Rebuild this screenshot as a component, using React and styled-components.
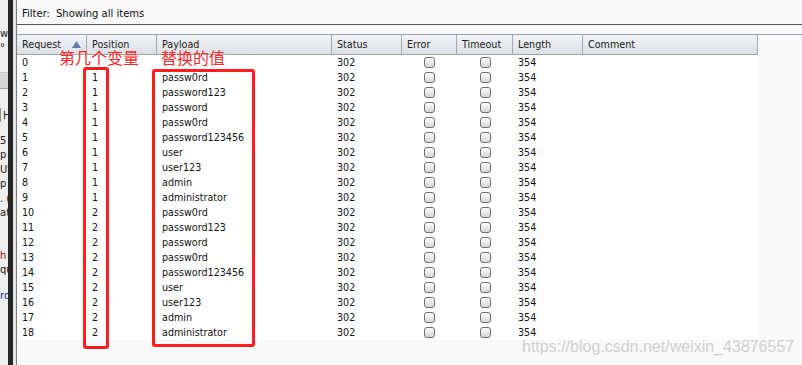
import styled, { createGlobalStyle } from 'styled-components';

const GlobalStyle = createGlobalStyle`
  html, body {
    margin: 0;
    padding: 0;
  }
  body {
    width: 802px;
    height: 365px;
    overflow: hidden;
    background: #f9f9f9;
    font-family: "DejaVu Sans", "Liberation Sans", sans-serif;
    color: #111;
  }
`;

const COLUMNS = '70px 70px 175px 70px 55px 56px 70px 175px';

const payloads = ['passw0rd', 'password123', 'password', 'passw0rd', 'password123456', 'user', 'user123', 'admin', 'administrator'];

const rows = [
    { id: 0, pos: '', payload: '' },
    ...payloads.map((p, i) => ({ id: i + 1, pos: 1, payload: p })),
    ...payloads.map((p, i) => ({ id: i + 10, pos: 2, payload: p })),
];

const sliverLines = [
    { text: 'wh', h: 14, top: 26 },
    { text: '\u00b0 p', h: 14 },
    { band: true, top: 18 },
    { text: 'H', h: 14, top: 19, tab: true },
    { text: '5', h: 14.5, top: 11 },
    { text: 'p', h: 14.5 },
    { text: 'US', h: 14.5 },
    { text: 'p', h: 14.5 },
    { text: '. (', h: 14.5 },
    { text: 'at', h: 14.5 },
    { text: 'h', h: 14.5, top: 28, color: '#8b1010' },
    { text: 'qu', h: 14.5 },
    { text: 'rd', h: 14.5, top: 11, color: '#1b1b9a' },
];

export default function App() {
    return (
        <>
            <GlobalStyle />
            <Frame>
                <Sliver>
                    {sliverLines.map((l, i) =>
                        l.band ? (
                            <SliverBand key={i} style={{ marginTop: l.top }} />
                        ) : (
                            <SliverLine
                                key={i}
                                $tab={l.tab}
                                $color={l.color}
                                style={{ height: l.h, marginTop: l.top || 0 }}
                            >
                                {l.text}
                            </SliverLine>
                        )
                    )}
                </Sliver>
                <Splitter />
                <Gutter />
                <Main>
                    <FilterBar>
                        <FilterLabel>Filter:</FilterLabel>
                        <span>Showing all items</span>
                    </FilterBar>
                    <Pane>
                        <Table>
                            <HeaderRow>
                                <HeadCell>
                                    Request
                                    <SortArrow viewBox="0 0 9 7">
                                        <polygon points="4.5,0 9,7 0,7" />
                                    </SortArrow>
                                </HeadCell>
                                <HeadCell>Position</HeadCell>
                                <HeadCell>Payload</HeadCell>
                                <HeadCell>Status</HeadCell>
                                <HeadCell>Error</HeadCell>
                                <HeadCell>Timeout</HeadCell>
                                <HeadCell>Length</HeadCell>
                                <HeadCell>Comment</HeadCell>
                            </HeaderRow>
                            {rows.map((r) => (
                                <Row key={r.id}>
                                    <Cell>{r.id}</Cell>
                                    <Cell>{r.pos}</Cell>
                                    <Cell>{r.payload}</Cell>
                                    <Cell>302</Cell>
                                    <Cell $center><Check /></Cell>
                                    <Cell $center><Check /></Cell>
                                    <Cell>354</Cell>
                                    <Cell />
                                </Row>
                            ))}
                        </Table>
                    </Pane>
                </Main>

                <Note style={{ left: 59, top: 47 }}>第几个变量</Note>
                <Note style={{ left: 161, top: 47 }}>替换的值</Note>
                <Marker style={{ left: 83, top: 67, width: 26, height: 282 }} />
                <Marker style={{ left: 152, top: 69, width: 103, height: 278 }} />
                <Watermark>https://blog.csdn.net/weixin_43876557</Watermark>
            </Frame>
        </>
    );
}

const Frame = styled.div`
    position: relative;
    display: flex;
    width: 802px;
    height: 365px;
    overflow: hidden;
`;

const Sliver = styled.div`
    width: 8px;
    flex: none;
    display: flex;
    flex-direction: column;
    overflow: hidden;
    background: #eeeeee;
    font-size: 10px;
`;

const SliverLine = styled.div`
    display: flex;
    align-items: center;
    white-space: nowrap;
    padding-left: ${(p) => (p.$tab ? '2px' : '0')};
    border-left: ${(p) => (p.$tab ? '1px solid #8a8a8a' : 'none')};
    color: ${(p) => p.$color || '#222'};
`;

const SliverBand = styled.div`
    height: 15px;
    background: #d6d6d6;
    border-top: 1px solid #c4c4c4;
    border-bottom: 1px solid #a8a8a8;
`;

const Splitter = styled.div`
    width: 5px;
    flex: none;
    background: #272727;
`;

const Gutter = styled.div`
    width: 3px;
    flex: none;
    background: #e6e6e6;
`;

const Main = styled.div`
    flex: 1;
    display: flex;
    flex-direction: column;
    border-left: 1px solid #7c7c7c;
    background: #f9f9f9;
`;

const FilterBar = styled.div`
    height: 25px;
    display: flex;
    align-items: center;
    padding: 2px 0 0 5px;
    box-sizing: border-box;
    border-bottom: 1px solid #555;
    background: #f9f9f9;
    font-size: 10px;
    color: #111;
`;

const FilterLabel = styled.span`
    margin-right: 6px;
`;

const Pane = styled.div`
    margin-top: 9px;
    flex: 1;
    border-top: 1px solid #99a2ad;
`;

const Table = styled.div`
    width: 741px;
    font-size: 9.6px;
`;

const HeaderRow = styled.div`
    display: grid;
    grid-template-columns: ${COLUMNS};
    height: 19px;
    border-bottom: 1px solid #9da4ad;
    background: linear-gradient(#f1f3f6, #dcdfe4);
`;

const HeadCell = styled.div`
    display: flex;
    align-items: center;
    justify-content: space-between;
    padding: 0 5px;
    border-right: 1px solid #a3a9b2;
    color: #222;
    white-space: nowrap;
`;

const SortArrow = styled.svg`
    width: 9px;
    height: 7px;
    fill: #5b80b0;
`;

const Row = styled.div`
    display: grid;
    grid-template-columns: ${COLUMNS};
    height: 15px;
    background: #ffffff;
`;

const Cell = styled.div`
    display: flex;
    align-items: center;
    justify-content: ${(p) => (p.$center ? 'center' : 'flex-start')};
    padding: 0 5px;
    white-space: nowrap;
    color: #111;
`;

const Check = styled.span`
    width: 9px;
    height: 9px;
    border: 1px solid #6f6f6f;
    border-radius: 3px;
    background: linear-gradient(#fdfdfd, #d6d6d6);
`;

const Note = styled.div`
    position: absolute;
    font-family: "Noto Sans CJK SC", sans-serif;
    font-size: 16px;
    line-height: 20px;
    color: #ff2626;
    white-space: nowrap;
`;

const Marker = styled.div`
    position: absolute;
    box-sizing: border-box;
    border: 3px solid #ff1c1c;
    border-radius: 3px;
`;

const Watermark = styled.div`
    position: absolute;
    left: 522px;
    top: 338px;
    font-family: "Liberation Sans", Arial, sans-serif;
    font-size: 16px;
    line-height: 18px;
    color: #d0d0d0;
    white-space: nowrap;
`;
